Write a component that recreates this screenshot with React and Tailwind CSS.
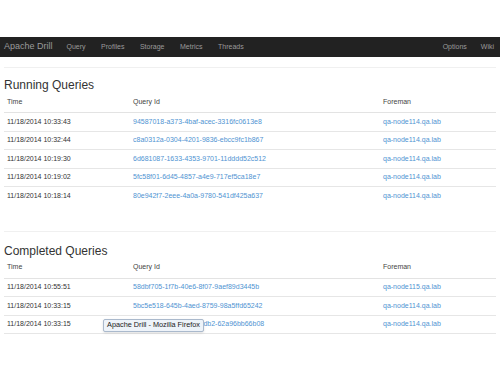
// App.jsx - Apache Drill profiles page
const running = [
  ["11/18/2014 10:33:43", "94587018-a373-4baf-acec-3316fc0613e8", "qa-node114.qa.lab"],
  ["11/18/2014 10:32:44", "c8a0312a-0304-4201-9836-ebcc9fc1b867", "qa-node114.qa.lab"],
  ["11/18/2014 10:19:30", "6d681087-1633-4353-9701-11dddd52c512", "qa-node114.qa.lab"],
  ["11/18/2014 10:19:02", "5fc58f01-6d45-4857-a4e9-717ef5ca18e7", "qa-node114.qa.lab"],
  ["11/18/2014 10:18:14", "80e942f7-2eee-4a0a-9780-541df425a637", "qa-node114.qa.lab"],
];

const completed = [
  ["11/18/2014 10:55:51", "58dbf705-1f7b-40e6-8f07-9aef89d3445b", "qa-node115.qa.lab"],
  ["11/18/2014 10:33:15", "5bc5e518-645b-4aed-8759-98a5ffd65242", "qa-node114.qa.lab"],
  ["11/18/2014 10:33:15", "1a7c2e04-3e1f-4cb1-adb2-62a96bb66b08", "qa-node114.qa.lab"],
];

function QueryTable({ title, rows, lastBorder, tooltip }) {
  return (
    <div className="relative">
      <h3 className="text-[12px] leading-[14px] text-[#333] pl-[4px]">{title}</h3>
      <div className="mx-[4px] flex h-[21px] items-center border-b border-[#e3e3e3] text-[7px] text-[#444]">
        <div className="w-[126px] pl-[3px]">Time</div>
        <div className="w-[250px] pl-[3px]">Query Id</div>
        <div className="flex-1 pl-[3px]">Foreman</div>
      </div>
      {rows.map((r, i) => (
        <div
          key={i}
          className={
            "mx-[4px] flex h-[18.5px] items-center text-[7px] " +
            (i < rows.length - 1 || lastBorder ? "border-b border-[#e6e6e6]" : "")
          }
        >
          <div className="w-[126px] pl-[3px] text-[#333]">{r[0]}</div>
          <div className="w-[250px] pl-[3px] text-[#4f93d2]">{r[1]}</div>
          <div className="flex-1 pl-[3px] text-[#4f93d2]">{r[2]}</div>
        </div>
      ))}
      {tooltip && (
        <div className="absolute left-[103px] bottom-[2px] flex h-[13px] w-[101px] items-center justify-center rounded-[2px] border border-[#aab9cc] bg-[#eef3f9] text-[7.3px] text-[#222] shadow-sm">
          Apache Drill - Mozilla Firefox
        </div>
      )}
    </div>
  );
}

export default function App() {
  return (
    <div
      className="h-[375px] w-[500px] overflow-hidden bg-white"
      style={{ fontFamily: '"Liberation Sans", Arial, sans-serif' }}
    >
      <div className="h-[37px]" />
      <nav className="flex h-[20px] items-center bg-[#222] pl-[4px] pr-[6px] text-[#9a9a9a]">
        <span className="text-[9px]">Apache Drill</span>
        <div className="ml-[14px] flex gap-[15.5px] text-[7px]">
          <span>Query</span>
          <span>Profiles</span>
          <span>Storage</span>
          <span>Metrics</span>
          <span>Threads</span>
        </div>
        <div className="ml-auto flex gap-[14px] text-[7px]">
          <span>Options</span>
          <span>Wiki</span>
        </div>
      </nav>
      <div className="mx-[4px] mt-[10px] border-t border-[#f0f0f0]" />
      <div className="mt-[10px]">
        <QueryTable title="Running Queries" rows={running} />
      </div>
      <div className="mx-[4px] mt-[25px] border-t border-[#f0f0f0]" />
      <div className="mt-[12px]">
        <QueryTable title="Completed Queries" rows={completed} lastBorder tooltip />
      </div>
    </div>
  );
}
